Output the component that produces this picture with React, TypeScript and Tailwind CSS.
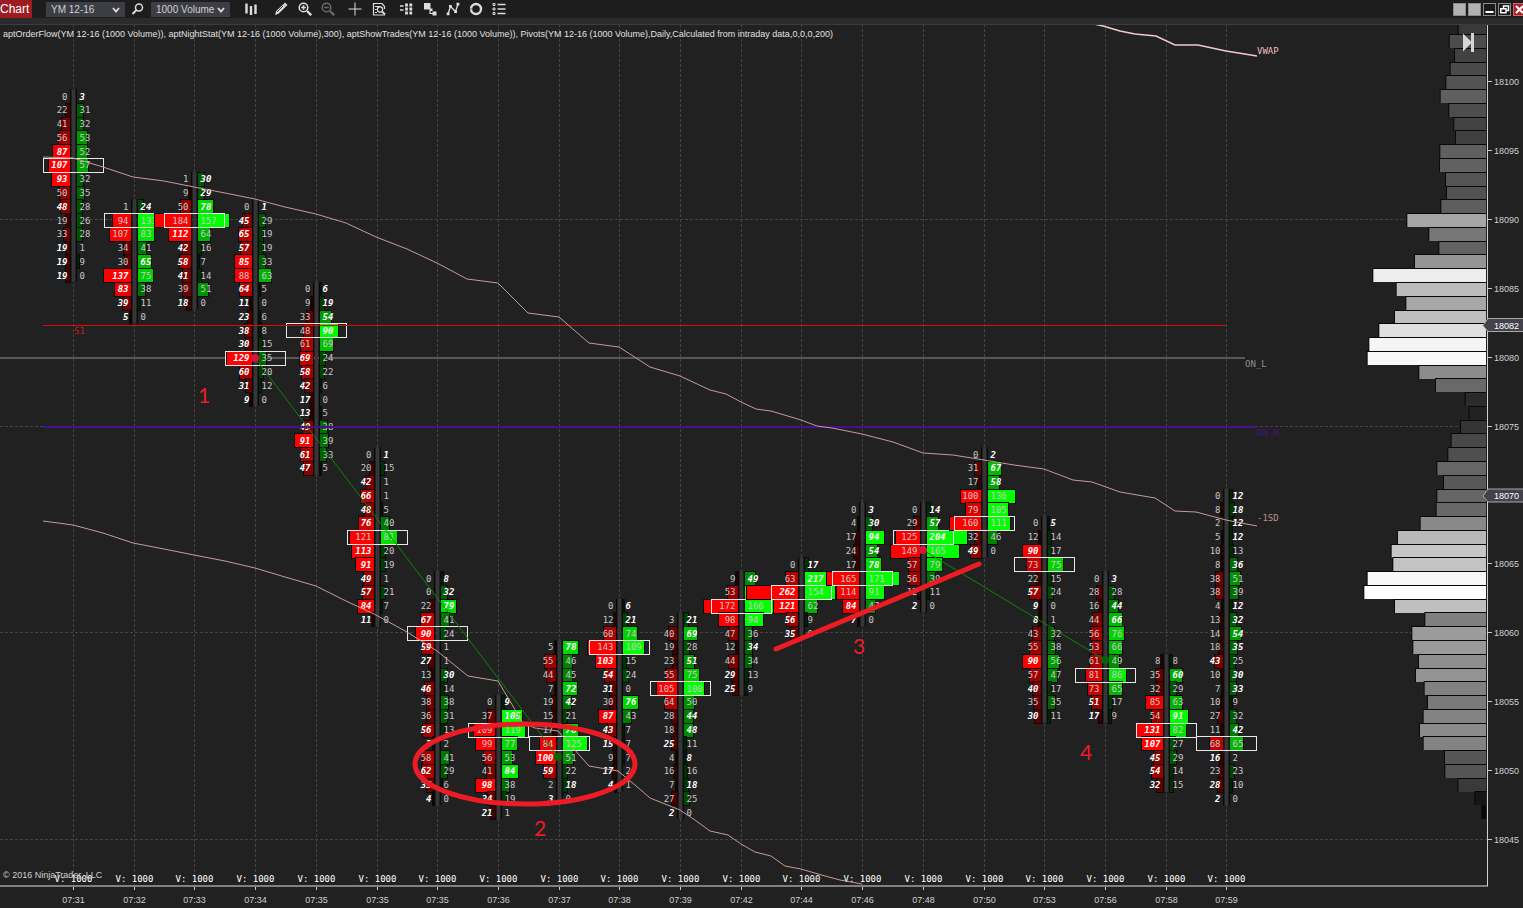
import type { ReactNode } from "react";

type Column = { time: string; top: number; poc: number; bid: string; ask: string };

// A trailing "b" marks an imbalance, drawn bold and white.
const COLUMNS: Column[] = [
  { time: "07:31", top: 99, poc: 5, bid: "0 22 41 56 87b 107b 93b 50 48b 19 33 19b 19b 19b", ask: "3b 31 32 53 52 57 32 35 28 26 28 1 9 0" },
  { time: "07:32", top: 91, poc: 1, bid: "1 94 107 34 30 137b 83b 39b 5b", ask: "24b 133 83 41 65b 75 38 11 0" },
  { time: "07:33", top: 93, poc: 3, bid: "1 9 50 184 112b 42b 58b 41b 39 18b", ask: "30b 29b 78b 157 64 16 7 14 51 0" },
  { time: "07:34", top: 91, poc: 11, bid: "0 45b 65b 57b 85b 88 64b 11b 23b 38b 30b 129b 60b 31b 9b", ask: "1b 29 19 19 33 63 5 0 6 8 15 35 20 12 0" },
  { time: "07:35", top: 85, poc: 3, bid: "0 9 33 48 61 69b 58b 42b 17b 13b 49b 91b 61b 47b", ask: "6b 19b 54b 90b 69 24 22 6 0 5 38 39 33 5" },
  { time: "07:35", top: 73, poc: 6, bid: "0 20 42b 66b 48b 76b 121 113b 91b 49b 57b 84b 11b", ask: "1b 15 1 1 5 40 81 20 19 1 21 7 0" },
  { time: "07:35", top: 64, poc: 4, bid: "0 0 22 67b 90b 59b 27b 13 46b 38 36 56b 7b 58 62b 35b 4b", ask: "8b 32b 79b 41 24 1 1 30b 14 38 31 13 2 41 29 6 0" },
  { time: "07:36", top: 55, poc: 2, bid: "0 37 109 99 56 41 98b 34b 21b", ask: "9b 105b 119 77 53 84b 38 19 1" },
  { time: "07:37", top: 59, poc: 7, bid: "5 55 44 7 19 15 17 84 100b 59b 2 3b", ask: "78b 46 45 72b 42b 21 76b 125 51 22 18b 0" },
  { time: "07:38", top: 62, poc: 3, bid: "0 12 60 143 103b 54b 31b 30 87b 43b 15b 9 17b 4b", ask: "6b 21b 74 109 15 24 0 76b 43 7 7 7 2 1" },
  { time: "07:39", top: 61, poc: 5, bid: "3 40 19 23 55 105 64 28 18 25b 4 16 7 27 2b", ask: "21b 69b 28 51b 75 100 50 44b 48b 11 8b 16 18b 25 0" },
  { time: "07:42", top: 64, poc: 2, bid: "9 53 172 98 47 12 44 29b 25b", ask: "49b 110 166 94 36 34b 34 13 9" },
  { time: "07:44", top: 65, poc: 2, bid: "0 63 262b 121b 56b 35b", ask: "17b 217b 154 62 9 0" },
  { time: "07:46", top: 69, poc: 5, bid: "0 4 17 24 17 165 114 84b 7b", ask: "3b 30b 94b 54b 78b 171 91 47 0" },
  { time: "07:48", top: 69, poc: 2, bid: "0 29 125 149 57 56 12 2b", ask: "14b 57b 204b 165 79 39 11 0" },
  { time: "07:50", top: 73, poc: 5, bid: "0 31 17 100 79 160 32 49b", ask: "2b 67b 58b 136 105 111 46 0" },
  { time: "07:53", top: 68, poc: 3, bid: "0 12 90b 73 22 57b 9b 8b 43 55 90b 57 40b 35 30b", ask: "5b 14 17 75 15 24 0 1 32 38 56 47 17 35 11" },
  { time: "07:56", top: 64, poc: 7, bid: "0 28 16 44 56 53 61 81 73 51b 17b", ask: "3b 28 44b 66b 76 66 49 86 65 17 9" },
  { time: "07:58", top: 58, poc: 5, bid: "8 35 32 85 54 131b 107b 45b 54b 32b", ask: "8 60b 29 63 91b 82 27 29 14 15" },
  { time: "07:59", top: 70, poc: 18, bid: "0 8 2 5 10 8 38 38 4 13 14 18 43b 10 7 10 27 11 68 16b 23 28b 2b", ask: "12b 18b 12b 12b 13 36b 51 39 12b 32b 54b 35b 25 30b 33b 9 32 42b 65 2 23 10 0" },
];

// Volume profile widths, from 18104 down to 18047.
const PROFILE = [
  82, 109, 93, 106, 119, 136, 110, 95, 90, 137, 138, 120, 117, 134, 236, 170, 140, 213, 338, 268, 239, 273, 320, 350,
  355, 200, 150, 61, 49, 75, 103, 113, 146, 126, 146, 148, 196, 264, 283, 278, 355, 365, 273, 182, 221, 218, 201, 210,
  184, 174, 187, 198, 187, 123, 122, 83, 32, 11,
];

const ROW = 13.77;
const LABELLED = [100, 95, 90, 85, 80, 75, 65, 60, 55, 50, 45];
const columnX = (i: number) => Math.round(73 + i * 60.7) + 0.5;
const priceY = (p: number) => 220 + (90 - p) * ROW;

const SD_UPPER =
  "43,157 73,158 103,167 133,177 164,181 194,187 225,193 255,199 285,207 316,214 346,223 376,237 407,249 437,263 467,279 498,283 528,313 559,317 589,343 619,347 650,367 680,376 710,390 726,394 741,402 756,409 771,411 801,420 817,426 832,428 862,434 893,442 923,453 953,455 984,460 1014,465 1044,469 1073,480 1092,482 1120,492 1155,498 1175,511 1196,512 1226,520 1257,526";
const SD_LOWER =
  "43,521 73,525 103,533 133,543 164,549 194,555 225,561 255,568 285,577 316,586 346,601 376,615 407,632 437,651 468,676 498,681 523,723 535,728 558,731 589,766 618,771 635,785 650,798 680,810 695,820 710,831 728,835 741,844 755,852 771,856 785,866 801,869 825,876 840,880 862,884";
const VWAP = "1094,24 1103,26 1120,31 1135,34 1156,36 1175,45 1198,45 1226,51 1257,56";

function FootprintColumn({ col, index }: { col: Column; index: number }) {
  const cx = columnX(index);
  const bids = col.bid.split(" ");
  const asks = col.ask.split(" ");
  const top = priceY(col.top) - ROW / 2;
  const height = bids.length * ROW;
  const shade = (v: number) => Math.min(255, Math.round(v * 2.7 + 8));
  const cell = (raw: string, row: number, isBid: boolean) => {
    const value = parseInt(raw, 10);
    const strong = raw.endsWith("b");
    const y = top + row * ROW;
    const w = Math.round(value * 0.195);
    const edge = isBid ? cx - 3.5 - w : cx + 3.5;
    return (
      <g key={(isBid ? "b" : "a") + row}>
        {value > 3 && (
          <g shapeRendering="crispEdges">
            <rect x={edge - 1} y={Math.round(y)} width={w + 2} height={15} fill="#0a0a0a" />
            <rect
              x={edge}
              y={Math.round(y) + 1}
              width={w}
              height={13}
              fill={isBid ? `rgb(${shade(value)},0,0)` : `rgb(0,${shade(value)},0)`}
            />
          </g>
        )}
        <text
          x={isBid ? cx - 6 : cx + 6}
          y={Math.round(y + ROW / 2 + 3.5)}
          textAnchor={isBid ? "end" : "start"}
          className={strong ? "fill-white font-bold italic" : "fill-[#c8c8c8]"}
        >
          {value}
        </text>
      </g>
    );
  };
  return (
    <g>
      <rect x={cx - 1.5} y={top} width={3} height={height} fill="#363639" />
      <path d={`M${cx - 3} ${top}v${height}M${cx + 3} ${top}v${height}`} stroke="#080808" />
      {bids.map((v, r) => cell(v, r, true))}
      {asks.map((v, r) => cell(v, r, false))}
      <rect x={cx - 30} y={Math.round(top + col.poc * ROW) + 0.5} width={60} height={14} fill="none" stroke="#e8e8e8" />
    </g>
  );
}

function PriceTag({ price, y }: { price: number; y: number }) {
  return (
    <g>
      <path d={`M1483 ${y}l5 -7h36v13h-36z`} fill="#42424a" stroke="#a8a8ac" />
      <text x={1494} y={y + 3} className="fill-white">{price}</text>
    </g>
  );
}

function Chart() {
  return (
    <svg viewBox="0 24 1523 884" className="block h-auto w-full font-['Liberation_Sans',sans-serif] text-[9px]" role="img" aria-label="Order flow chart">
      <rect x={0} y={24} width={1523} height={884} fill="#212121" />
      <g stroke="#444444" strokeDasharray="3 2">
        {COLUMNS.map((_, i) => (
          <line key={i} x1={columnX(i)} x2={columnX(i)} y1={24} y2={885} />
        ))}
        {[90, 75, 60, 45].map((p) => (
          <line key={p} x1={0} x2={1487} y1={Math.round(priceY(p)) - 0.5} y2={Math.round(priceY(p)) - 0.5} />
        ))}
      </g>

      <g>
        {PROFILE.map((w, i) => {
          const y = Math.round(priceY(104 - i) - ROW / 2);
          const g = Math.round(w * 0.7);
          return (
            <g key={i}>
              <rect x={1485 - w / 3} y={y} width={w / 3 + 1} height={14} fill="#080808" />
              <rect x={1486 - w / 3} y={y + 1} width={w / 3} height={13} fill={`rgb(${g},${g},${g})`} />
            </g>
          );
        })}
      </g>
      <path d="M1463 33.500l9 9-9 9z" fill="#d8d8d8" />
      <path d="M1472.500 33v19" stroke="#d8d4cc" strokeWidth={3} />

      <rect x={0} y={357} width={1245} height={2} fill="#585858" />
      <g className="font-['DejaVu_Sans_Mono',monospace]">
        {COLUMNS.map((col, i) => (
          <FootprintColumn key={i} col={col} index={i} />
        ))}
        {COLUMNS.map((_, i) => (
          <text key={i} x={columnX(i)} y={882} textAnchor="middle" className="fill-white">V: 1000</text>
        ))}
      </g>

      <g shapeRendering="crispEdges">
        <rect x={43} y={325} width={1183} height={1} fill="#d80c0c" />
        <rect x={43} y={426} width={1214} height={2} fill="#46108c" />
      </g>
      <g fill="none" stroke="#c79a9a">
        <polyline points={SD_UPPER} />
        <polyline points={SD_LOWER} />
        <polyline points={VWAP} stroke="#f5c8cc" strokeWidth={1.5} />
      </g>
      <g stroke="#0a860a">
        <path d="M255 358L558 757" />
        <path d="M923 550L1105 660" />
      </g>
      <circle cx={255} cy={358} r={4} fill="#dc143c" />
      <circle cx={923} cy={550} r={4} fill="#dc143c" />
      <circle cx={558} cy={757} r={4} fill="#046404" />
      <circle cx={1105} cy={660} r={4} fill="#046404" />

      <g className="font-['DejaVu_Sans_Mono',monospace]">
        <text x={74} y={334} className="fill-[#d01818]">S1</text>
        <text x={1257} y={54} className="fill-[#efb9bf]">VWAP</text>
        <text x={1245} y={367} className="fill-[#8c8c8c]">ON_L</text>
        <text x={1257} y={436} className="fill-[#46108a]">ON_M</text>
        <text x={1257} y={521} className="fill-[#b89090]">-1SD</text>
      </g>

      <g fill="none" stroke="#ed1c24" strokeWidth={5} strokeLinecap="round">
        <ellipse cx={525} cy={764} rx={110} ry={40} />
        <path d="M776 649L979 564" />
      </g>
      <g textAnchor="middle" className="fill-[#ed1c24] font-['Lato',sans-serif] text-[21px]">
        <text x={204} y={403}>1</text>
        <text x={540} y={836}>2</text>
        <text x={859} y={654}>3</text>
        <text x={1086} y={760}>4</text>
      </g>

      <text x={3} y={37} className="fill-[#e0e0e0]">
        aptOrderFlow(YM 12-16 (1000 Volume)), aptNightStat(YM 12-16 (1000 Volume),300), aptShowTrades(YM 12-16 (1000 Volume)), Pivots(YM 12-16 (1000 Volume),Daily,Calculated from intraday data,0,0,0,200)
      </text>
      <text x={3} y={878} className="fill-[#d0d0d0]">© 2016 NinjaTrader, LLC</text>

      <path d="M0 24.500H1523" stroke="#3c3c3f" />
      <path d="M0 886H1488" stroke="#808080" strokeWidth={2} />
      <path d="M1487.500 25V886" stroke="#d0d0d0" />
      <g className="fill-[#d0d0d0]">
        {COLUMNS.map((col, i) => (
          <g key={i}>
            <path d={`M${columnX(i)} 887v3`} stroke="#c8c8c8" />
            <text x={columnX(i)} y={903} textAnchor="middle">{col.time}</text>
          </g>
        ))}
        {LABELLED.map((p) => (
          <g key={p}>
            <path d={`M1488 ${Math.round(priceY(p)) - 0.5}h4`} stroke="#c8c8c8" />
            <text x={1494} y={Math.round(priceY(p)) + 3}>{18000 + p}</text>
          </g>
        ))}
      </g>
      <PriceTag price={18082} y={325.5} />
      <PriceTag price={18070} y={496} />
    </svg>
  );
}

function Tool({ label, className = "w-6", children }: { label: string; className?: string; children: ReactNode }) {
  return (
    <button type="button" aria-label={label} className={`flex h-[18px] shrink-0 items-center justify-center text-[#dcdcdc] ${className}`}>
      <svg viewBox="0 0 14 14" className="size-[14px]" fill="none" stroke="currentColor" strokeWidth={1.5}>
        {children}
      </svg>
    </button>
  );
}

function Picker({ label, value }: { label: string; value: string }) {
  return (
    <label className="relative mt-[2px] flex h-[15px] w-[79px] shrink-0 items-center bg-[#3d3d45]">
      <select aria-label={label} defaultValue={value} className="h-[15px] w-full appearance-none bg-transparent pl-[5px] text-[10px] leading-[15px] text-[#d0d0d0] outline-none">
        <option>{value}</option>
      </select>
      <svg viewBox="0 0 8 6" className="pointer-events-none absolute right-[5px] h-[6px] w-[8px]" fill="none" stroke="#dcdcdc" strokeWidth={1.8}>
        <path d="M1 1l3 3.500L7 1" />
      </svg>
    </label>
  );
}

function WindowButton({ label, className, children }: { label: string; className: string; children?: ReactNode }) {
  return (
    <button type="button" aria-label={label} className={`size-[13px] shrink-0 border ${className}`}>
      <svg viewBox="0 0 11 11" className="size-[11px]" fill="none" stroke="#ffffff" strokeWidth={1.5}>
        {children}
      </svg>
    </button>
  );
}

function Toolbar() {
  return (
    <header className="flex h-6 items-start overflow-hidden border-b-[6px] border-[#2b2b2e] bg-[#1d1d1d] font-['Liberation_Sans',sans-serif]">
      <button type="button" className="h-[18px] w-8 shrink-0 bg-[#9c1c22] text-left text-[12px] leading-[18px] text-white">
        Chart
      </button>
      <div className="ml-[14px] flex shrink-0 items-start">
        <Picker label="Instrument" value="YM 12-16" />
        <Tool label="Search" className="w-[26px]">
          <circle cx="8" cy="5.500" r="3.500" />
          <path d="M5.500 8L1.500 12" strokeWidth={2} />
        </Tool>
        <Picker label="Interval" value="1000 Volume" />
      </div>
      <nav className="ml-[9px] flex shrink-0 items-start" aria-label="Chart tools">
        <Tool label="Chart style">
          <path d="M2.500 1.500v10M7 4v9M11.500 2.500v9.500" strokeWidth={2.400} />
        </Tool>
        <Tool label="Draw" className="ml-[6px] w-6">
          <path d="M1 13l1.200-4L9.500 2 12 4.500 4.500 11.800z" fill="currentColor" stroke="none" />
          <path d="M10.300 1.200l2.500 2.500" strokeWidth={2} />
          <path d="M3 10l6-6" stroke="#1d1d1d" strokeWidth={0.8} />
        </Tool>
        <Tool label="Zoom in">
          <circle cx="5.500" cy="5.500" r="4.300" />
          <path d="M3.200 5.500h4.600M5.500 3.200v4.600" />
          <path d="M9 9l4.200 4.200" strokeWidth={2.4} />
        </Tool>
        <Tool label="Zoom out" className="w-[22px] opacity-40">
          <circle cx="5.500" cy="5.500" r="4.300" />
          <path d="M3.200 5.500h4.600" />
          <path d="M9 9l4.200 4.200" strokeWidth={2.4} />
        </Tool>
        <Tool label="Crosshair" className="ml-1 w-6">
          <path d="M.5 7h13M7 .5v13" strokeWidth={1} />
        </Tool>
        <Tool label="Data box">
          <path d="M12.500 7V4.500L10 1.500H1.500v11.500H13" strokeWidth={1.200} />
          <path d="M3 4.500h5M3 10.500h2M3 7.500h1.500" strokeWidth={1} />
          <circle cx="8" cy="7.500" r="2.600" strokeWidth={1.300} />
          <path d="M10 9.500l3 3" strokeWidth={1.800} />
        </Tool>
        <Tool label="Market depth" className="ml-[3px] w-6">
          <path d="M1 4h3.500M1 8h3.500" strokeWidth={1.600} />
          <path d="M7.500 1.500v11M11.800 1.500v11" strokeWidth={2.800} strokeDasharray="3 1" />
        </Tool>
        <Tool label="Strategies">
          <path d="M1 1h6.500v6.500H1z" fill="currentColor" stroke="none" />
          <path d="M6.500 6.500h3V9h-3zM9.500 9.500H13.500V13.500H9.500z" fill="currentColor" stroke="none" />
          <path d="M7 9v2.500h3" strokeWidth={1.200} />
        </Tool>
        <Tool label="Indicators" className="w-[22px]">
          <path d="M2 12l2.500-7.500 5 5L12 2" strokeWidth={1.300} />
          <path d="M.7 10.500h2.800v2.800H.7zM3 3h2.800v2.800H3zM8.200 8.200H11V11H8.200zM10.500.7h2.800v2.800h-2.800z" fill="currentColor" stroke="none" />
        </Tool>
        <Tool label="Reload">
          <circle cx="7" cy="7" r="5" strokeWidth={2.400} strokeDasharray="15 .7" />
        </Tool>
        <Tool label="Properties" className="w-[22px]">
          <path d="M5.500 2.500h8M5.500 7h8M5.500 11.500h8" strokeWidth={1.700} />
          <path d="M1 1.500h2v2H1zM1 6h2v2H1zM1 10.500h2v2H1z" strokeWidth={1} />
        </Tool>
      </nav>
      <div className="-mr-[3px] ml-auto flex shrink-0 gap-[2px] pt-[3px]">
        <WindowButton label="Link instrument" className="border-[#8a8888] bg-[#b4b2b2]" />
        <WindowButton label="Link interval" className="border-[#8a8888] bg-[#b4b2b2]" />
        <WindowButton label="Minimize" className="border-[#8a8a8a] bg-[#1a1a1a]">
          <path d="M1.500 8h8" strokeWidth={2} />
        </WindowButton>
        <WindowButton label="Restore" className="border-[#8a8a8a] bg-[#1a1a1a]">
          <path d="M4.500 4V2h5v4.500h-2M1.800 4.800H7v4H1.800z" />
        </WindowButton>
        <WindowButton label="Close" className="border-[#c86a6a] bg-[#b01c22]">
          <path d="M2 2l7 7M9 2L2 9" strokeWidth={2.200} />
        </WindowButton>
      </div>
    </header>
  );
}

export default function App() {
  return (
    <main className="min-h-screen bg-[#212121]">
      <Toolbar />
      <Chart />
    </main>
  );
}
